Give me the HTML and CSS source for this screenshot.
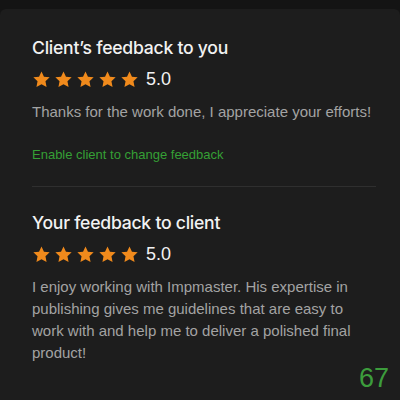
FILE: index.html
```html
<!DOCTYPE html>
<html lang="en">
<head>
    <meta charset="UTF-8">
    <meta name="viewport" content="width=device-width, initial-scale=1.0">
    <title>Feedback</title>
    <link rel="stylesheet" href="styles.css">
</head>
<body>
    <div class="panel">
        <section class="feedback">
            <h2>Client’s feedback to you</h2>
            <div class="rating">
                <div class="stars">
                    <svg viewBox="0 0 24 24"><path d="M12 1.8l3.1 6.6 7.2.9-5.3 5 1.4 7.1L12 17.9l-6.4 3.5L7 14.3l-5.3-5 7.2-.9z"/></svg>
                    <svg viewBox="0 0 24 24"><path d="M12 1.8l3.1 6.6 7.2.9-5.3 5 1.4 7.1L12 17.9l-6.4 3.5L7 14.3l-5.3-5 7.2-.9z"/></svg>
                    <svg viewBox="0 0 24 24"><path d="M12 1.8l3.1 6.6 7.2.9-5.3 5 1.4 7.1L12 17.9l-6.4 3.5L7 14.3l-5.3-5 7.2-.9z"/></svg>
                    <svg viewBox="0 0 24 24"><path d="M12 1.8l3.1 6.6 7.2.9-5.3 5 1.4 7.1L12 17.9l-6.4 3.5L7 14.3l-5.3-5 7.2-.9z"/></svg>
                    <svg viewBox="0 0 24 24"><path d="M12 1.8l3.1 6.6 7.2.9-5.3 5 1.4 7.1L12 17.9l-6.4 3.5L7 14.3l-5.3-5 7.2-.9z"/></svg>
                </div>
                <span class="score">5.0</span>
            </div>
            <p class="comment">Thanks for the work done, I appreciate your efforts!</p>
            <a class="enable-link" href="#">Enable client to change feedback</a>
        </section>

        <hr class="divider">

        <section class="feedback">
            <h2>Your feedback to client</h2>
            <div class="rating">
                <div class="stars">
                    <svg viewBox="0 0 24 24"><path d="M12 1.8l3.1 6.6 7.2.9-5.3 5 1.4 7.1L12 17.9l-6.4 3.5L7 14.3l-5.3-5 7.2-.9z"/></svg>
                    <svg viewBox="0 0 24 24"><path d="M12 1.8l3.1 6.6 7.2.9-5.3 5 1.4 7.1L12 17.9l-6.4 3.5L7 14.3l-5.3-5 7.2-.9z"/></svg>
                    <svg viewBox="0 0 24 24"><path d="M12 1.8l3.1 6.6 7.2.9-5.3 5 1.4 7.1L12 17.9l-6.4 3.5L7 14.3l-5.3-5 7.2-.9z"/></svg>
                    <svg viewBox="0 0 24 24"><path d="M12 1.8l3.1 6.6 7.2.9-5.3 5 1.4 7.1L12 17.9l-6.4 3.5L7 14.3l-5.3-5 7.2-.9z"/></svg>
                    <svg viewBox="0 0 24 24"><path d="M12 1.8l3.1 6.6 7.2.9-5.3 5 1.4 7.1L12 17.9l-6.4 3.5L7 14.3l-5.3-5 7.2-.9z"/></svg>
                </div>
                <span class="score">5.0</span>
            </div>
            <p class="comment long">I enjoy working with Impmaster. His expertise in publishing gives me guidelines that are easy to work with and help me to deliver a polished final product!</p>
        </section>

        <div class="counter">67</div>
    </div>
</body>
</html>
```

FILE: styles.css
```css
body {
    margin: 0;
    background-color: #141414;
    font-family: "Liberation Sans", Arial, sans-serif;
    color: #f2f2f2;
}

.panel {
    margin-top: 9px;
    height: 391px;
    background-color: #1d1d1d;
    border-radius: 6px 6px 0 0;
    padding: 27px 24px 0 32px;
    box-sizing: border-box;
}

.feedback h2 {
    margin: 0;
    font-family: Inter, "Liberation Sans", sans-serif;
    font-size: 17.6px;
    font-weight: 500;
    line-height: 24px;
    letter-spacing: -0.25px;
}

.rating {
    display: flex;
    align-items: center;
    margin-top: 8px;
    height: 22px;
}

.stars {
    display: flex;
    gap: 3px;
}

.stars svg {
    width: 19px;
    height: 19px;
    fill: #f08a1c;
}

.score {
    margin-left: 7px;
    font-size: 18px;
}

.comment {
    margin: 11px 0 0;
    color: #a3a3a3;
    font-size: 15px;
    line-height: 22px;
}

.enable-link {
    display: block;
    margin-top: 24px;
    color: #35a035;
    font-size: 13px;
    text-decoration: none;
}

.divider {
    margin: 24px 0 0;
    border: none;
    border-top: 1px solid #2f2f2f;
}

.divider + .feedback {
    margin-top: 24px;
}

.comment.long {
    margin-top: 11px;
}

.counter {
    margin-top: -1px;
    margin-right: -13px;
    text-align: right;
    color: #3c9c3c;
    font-size: 27px;
    font-weight: 300;
}
```
